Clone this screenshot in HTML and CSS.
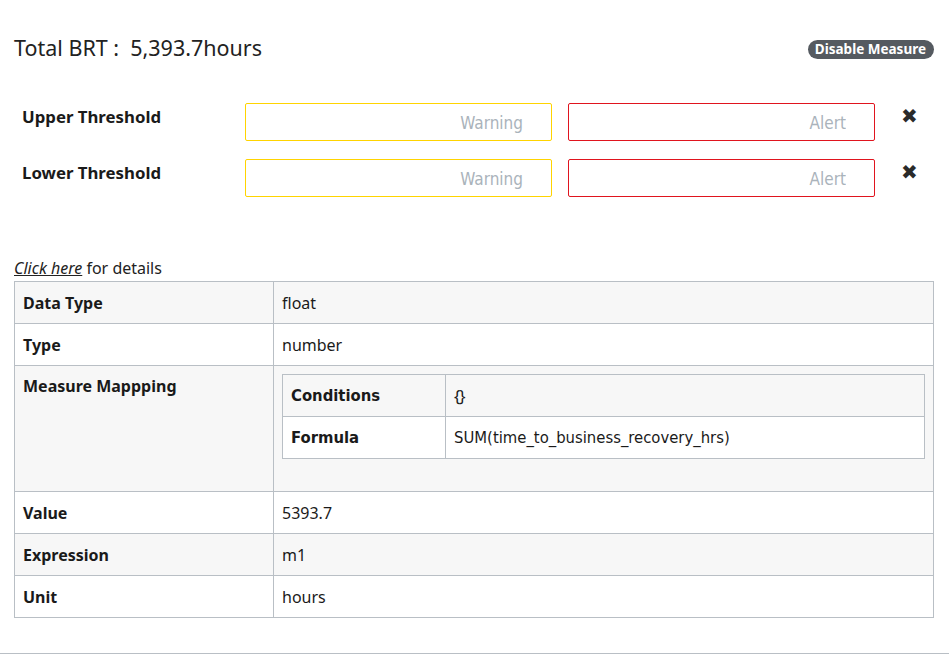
FILE: index.html
```html
<!DOCTYPE html>
<html>
<head>
<meta charset="utf-8">
<link rel="stylesheet" href="styles.css">
</head>
<body>
<div class="page">
  <div class="header">
    <div class="total">Total BRT :&nbsp; 5,393.7hours</div>
    <span class="badge">Disable Measure</span>
  </div>
  <div class="thresholds">
    <div class="trow">
      <div class="tlabel">Upper Threshold</div>
      <input class="inp warn" placeholder="Warning">
      <input class="inp alert" placeholder="Alert">
      <span class="close">&#x2716;</span>
    </div>
    <div class="trow">
      <div class="tlabel">Lower Threshold</div>
      <input class="inp warn" placeholder="Warning">
      <input class="inp alert" placeholder="Alert">
      <span class="close">&#x2716;</span>
    </div>
  </div>
  <div class="details"><a class="link">Click here</a> for details</div>
  <table class="info">
    <tr><th>Data Type</th><td>float</td></tr>
    <tr><th>Type</th><td>number</td></tr>
    <tr class="mrow"><th>Measure Mappping</th><td>
      <table class="inner">
        <tr><th>Conditions</th><td class="braces">{}</td></tr>
        <tr><th>Formula</th><td>SUM(time_to_business_recovery_hrs)</td></tr>
      </table>
    </td></tr>
    <tr><th>Value</th><td>5393.7</td></tr>
    <tr><th>Expression</th><td>m1</td></tr>
    <tr><th>Unit</th><td>hours</td></tr>
  </table>
</div>
<hr class="rule">
</body>
</html>
```
FILE: styles.css
```css
html, body { margin: 0; padding: 0; background: #fff; }
body { font-family: "Noto Sans", "Open Sans", sans-serif; color: #1a1a1a; }
.page { padding: 0 15px 0 14px; }
.header { display: flex; justify-content: space-between; align-items: center; padding-top: 32px; height: 30px; }
.total { font-size: 21.5px; color: #222; }
.badge { background: #555a60; color: #fff; font-weight: 700; font-size: 13.5px; border-radius: 10px; padding: 1px 8px 2px 7px; line-height: 16px; margin-top: 4px; }
.thresholds { padding-top: 41px; display: flex; flex-direction: column; gap: 18px; }
.trow { display: flex; align-items: flex-start; height: 38px; }
.tlabel { width: 223px; padding-left: 8px; font-weight: 700; font-size: 16.8px; line-height: 28px; }
.inp { box-sizing: border-box; width: 307px; height: 38px; border-radius: 2px; padding: 2px 28px 0; text-align: right; font-family: "Liberation Sans Narrow", "DejaVu Sans Condensed", sans-serif; font-stretch: condensed; font-size: 17px; background: #fff; outline: none; }
.inp::placeholder { color: #aab3bb; }
.warn { border: 1px solid #ffd400; margin-right: 16px; }
.alert { border: 1px solid #e0141e; }
.close { font-size: 20px; color: #2a2a2a; margin-left: 26px; line-height: 26px; }
.details { margin-top: 61px; font-size: 16px; color: #222; line-height: 20px; padding-bottom: 3px; }
.link { font-style: italic; text-decoration: underline; color: #222; }
.info { width: 920px; border-collapse: collapse; font-size: 16px; }
.info > tbody > tr > th, .info > tbody > tr > td { border: 1px solid #b9bfc5; height: 41px; padding: 0 8px; text-align: left; vertical-align: middle; }
.info > tbody > tr > th { width: 242px; font-weight: 700; }
.info > tbody > tr:nth-child(odd) { background: #f7f7f7; }
.info > tbody > tr.mrow > th { vertical-align: top; padding-top: 9px; }
.info > tbody > tr.mrow > td { padding: 8px 8px 32px; }
.inner { width: 100%; border-collapse: collapse; font-family: "Liberation Sans Narrow", "DejaVu Sans Condensed", sans-serif; font-stretch: condensed; font-size: 16.5px; }
.inner th, .inner td { border: 1px solid #b9bfc5; height: 41px; padding: 0 8px; text-align: left; }
.inner th { width: 146px; font-weight: 700; }
.inner td.braces { font-family: "Noto Sans", sans-serif; letter-spacing: -1px; }
.inner tr:first-child { background: #f7f7f7; }
.inner tr:last-child { background: #fff; }
.rule { border: 0; border-top: 1px solid #b9bfc5; margin: 35px 0 0; }
```
